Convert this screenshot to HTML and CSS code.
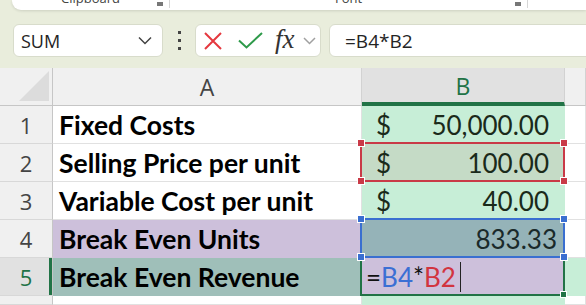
FILE: index.html
```html
<!DOCTYPE html>
<html lang="en">
<head>
    <meta charset="UTF-8">
    <meta name="viewport" content="width=device-width, initial-scale=1.0">
    <title>Break Even</title>
    <link rel="stylesheet" href="styles.css">
</head>
<body>

<div class="ribbon">
    <div class="group group-clipboard">
        <span class="group-label">Clipboard</span>
        <span class="launcher"></span>
    </div>
    <div class="group group-font">
        <span class="group-label">Font</span>
        <span class="launcher"></span>
    </div>
</div>

<div class="formula-bar">
    <div class="name-box">
        <span>SUM</span>
        <svg width="14" height="9" viewBox="0 0 14 9"><path d="M1 1.5 L7 7.5 L13 1.5" fill="none" stroke="#424242" stroke-width="1.5"/></svg>
    </div>
    <div class="dots"><i></i><i></i><i></i></div>
    <div class="fx-buttons">
        <svg class="btn-cancel" width="18" height="18" viewBox="0 0 18 18"><path d="M1 1 L17 17 M17 1 L1 17" stroke="#e5383e" stroke-width="2"/></svg>
        <svg class="btn-enter" width="25" height="17" viewBox="0 0 25 17"><path d="M1 8.5 L8.5 15.5 L24 1" fill="none" stroke="#2e9a4a" stroke-width="2"/></svg>
        <span class="fx">fx</span>
        <svg width="13" height="8" viewBox="0 0 13 8"><path d="M1 1 L6.5 6.5 L12 1" fill="none" stroke="#a0a0a0" stroke-width="1.5"/></svg>
    </div>
    <div class="formula-input">=B4*B2</div>
</div>

<div class="sheet">
    <div class="corner">
        <svg width="30" height="30" viewBox="0 0 30 30"><polygon points="30,0 30,30 0,30" fill="#dcdcdc"/></svg>
    </div>
    <div class="col-head">A</div>
    <div class="col-head active">B</div>
    <div class="col-head"></div>

    <div class="row-head">1</div>
    <div class="cell label">Fixed Costs</div>
    <div class="cell money fill-green"><span>$</span><span>50,000.00</span></div>
    <div class="cell"></div>

    <div class="row-head">2</div>
    <div class="cell label">Selling Price per unit</div>
    <div class="cell money fill-picked">
        <span>$</span><span>100.00</span>
        <span class="range range-red"><i class="h tl"></i><i class="h tr"></i><i class="h bl"></i><i class="h br"></i></span>
    </div>
    <div class="cell"></div>

    <div class="row-head">3</div>
    <div class="cell label">Variable Cost per unit</div>
    <div class="cell money fill-green"><span>$</span><span>40.00</span></div>
    <div class="cell"></div>

    <div class="row-head">4</div>
    <div class="cell label fill-purple">Break Even Units</div>
    <div class="cell number fill-slate">
        833.33
        <span class="range range-blue"><i class="h tl"></i><i class="h tr"></i><i class="h bl"></i><i class="h br"></i></span>
    </div>
    <div class="cell"></div>

    <div class="row-head active">5</div>
    <div class="cell label fill-teal">Break Even Revenue</div>
    <div class="cell edit fill-purple">
        =<span class="ref-blue">B4</span>*<span class="ref-red">B2</span><span class="caret"></span>
        <span class="range range-edit"><i class="fill-handle"></i></span>
    </div>
    <div class="cell fill-green"></div>

    <div class="row-head"></div>
    <div class="cell"></div>
    <div class="cell fill-green"></div>
    <div class="cell"></div>
</div>

</body>
</html>
```

FILE: styles.css
```css
body {
    margin: 0;
    width: 586px;
    height: 305px;
    overflow: hidden;
    background-color: #e9eddc;
    font-family: "Open Sans", sans-serif;
}

/* ribbon edge at the top */
.ribbon {
    display: flex;
    height: 10px;
    margin-left: 12px;
    overflow: hidden;
    background-color: #fff;
    border-radius: 0 0 0 9px;
    box-shadow: 0 1px 3px rgba(0, 0, 0, 0.12);
}
.group {
    display: flex;
    align-items: flex-end;
    justify-content: center;
    position: relative;
    border-right: 1px solid #d6d6d6;
    height: 8px;
}
.group-clipboard {
    width: 157px;
}
.group-font {
    width: 357px;
}
.group-label {
    font-size: 13px;
    line-height: 13px;
    color: #444;
    margin-bottom: 3px;
}
.launcher {
    position: absolute;
    right: 6px;
    bottom: 2px;
    width: 6px;
    height: 4px;
    background-color: #777;
}

/* formula bar */
.formula-bar {
    display: flex;
    align-items: center;
    height: 58px;
    padding: 3px 0 0 13px;
    box-sizing: border-box;
}
.name-box, .fx-buttons, .formula-input {
    height: 33px;
    box-sizing: border-box;
    background-color: #fff;
    border: 1px solid #d8dccb;
    border-radius: 6px;
}
.name-box {
    width: 150px;
    display: flex;
    align-items: center;
    justify-content: space-between;
    padding: 0 10px 0 7px;
    font-size: 18px;
    color: #242424;
}
.dots {
    width: 32px;
    display: flex;
    flex-direction: column;
    align-items: center;
    gap: 5px;
}
.dots i {
    width: 3px;
    height: 3px;
    background-color: #444;
}
.fx-buttons {
    width: 126px;
    display: flex;
    align-items: center;
    padding: 0 3px 0 8px;
}
.btn-cancel {
    margin-right: 16px;
}
.btn-enter {
    margin-right: 12px;
}
.fx {
    font-family: "Liberation Serif", serif;
    font-style: italic;
    font-size: 27px;
    color: #333;
    margin-right: 8px;
    margin-top: -3px;
}
.formula-input {
    flex: 1;
    margin-left: 8px;
    margin-right: -10px;
    padding-left: 15px;
    display: flex;
    align-items: center;
    font-size: 19px;
    color: #242424;
}

/* sheet */
.sheet {
    display: grid;
    grid-template-columns: 53px 309px 203px 1fr;
    grid-template-rows: 38px repeat(5, 38px) 1fr;
    height: 237px;
    background-color: #fff;
}
.corner {
    display: flex;
    align-items: flex-end;
    justify-content: flex-end;
    padding: 0 3px 4px 0;
    background-color: #f0f0f0;
    border-right: 1px solid #c6c6c6;
    border-bottom: 1px solid #c6c6c6;
}
.col-head {
    display: flex;
    align-items: center;
    justify-content: center;
    background-color: #f0f0f0;
    border-right: 1px solid #d2d2d2;
    border-bottom: 1px solid #c6c6c6;
    font-size: 23px;
    color: #444;
}
.col-head.active {
    background-color: #e1e1e1;
    color: #217346;
    border-bottom: 4px solid #217346;
    padding-top: 2px;
}
.row-head {
    display: flex;
    align-items: center;
    justify-content: center;
    background-color: #f0f0f0;
    border-right: 1px solid #c6c6c6;
    border-bottom: 1px solid #d8d8d8;
    font-size: 22px;
    color: #444;
}
.row-head.active {
    background-color: #e1e1e1;
    color: #217346;
    box-shadow: inset -3px 0 #217346;
}
.cell {
    position: relative;
    display: flex;
    align-items: center;
    border-right: 1px solid #e1e1e1;
    border-bottom: 1px solid #e1e1e1;
    font-family: Lato, "Open Sans", sans-serif;
    font-size: 26px;
    color: #111;
    white-space: nowrap;
}
.label {
    font-weight: bold;
    font-size: 26.5px;
    padding-left: 6px;
    color: #000;
}
.money {
    justify-content: space-between;
    padding: 0 15px 0 14px;
    color: #1a2a1a;
}
.number {
    justify-content: flex-end;
    padding-right: 7px;
    color: #1a2a2a;
}
.edit {
    padding-left: 4px;
}
.ref-blue {
    color: #3b6fd4;
}
.ref-red {
    color: #d2343f;
}
.caret {
    width: 1px;
    height: 30px;
    margin-left: 4px;
    background-color: #222;
}

.fill-green {
    background-color: #c7eed7;
    border-color: #c7eed7;
}
.fill-picked {
    background-color: #c5dbc6;
    border-color: #c5dbc6;
}
.fill-purple {
    background-color: #cdc0db;
    border-color: #cdc0db;
}
.fill-slate {
    background-color: #95b3b8;
    border-color: #95b3b8;
}
.fill-teal {
    background-color: #9fbfb9;
    border-color: #9fbfb9;
}

/* range outlines drawn over the grid */
.range {
    position: absolute;
    top: -2px;
    left: -2px;
    right: -1px;
    bottom: -1px;
    border: 2px solid;
    z-index: 2;
}
.range-red {
    border-color: #c93a47;
}
.range-blue {
    border-color: #3a6fd0;
}
.range-edit {
    border-color: #217346;
    z-index: 1;
}
.h {
    position: absolute;
    width: 6px;
    height: 6px;
    border: 1px solid #fff;
}
.range-red .h {
    background-color: #c93a47;
}
.range-blue .h {
    background-color: #3a6fd0;
}
.tl { top: -5px; left: -5px; }
.tr { top: -5px; right: -5px; }
.bl { bottom: -5px; left: -5px; }
.br { bottom: -5px; right: -5px; }
.fill-handle {
    position: absolute;
    right: -4px;
    bottom: -4px;
    width: 5px;
    height: 5px;
    background-color: #217346;
    border: 1px solid #fff;
}
```
